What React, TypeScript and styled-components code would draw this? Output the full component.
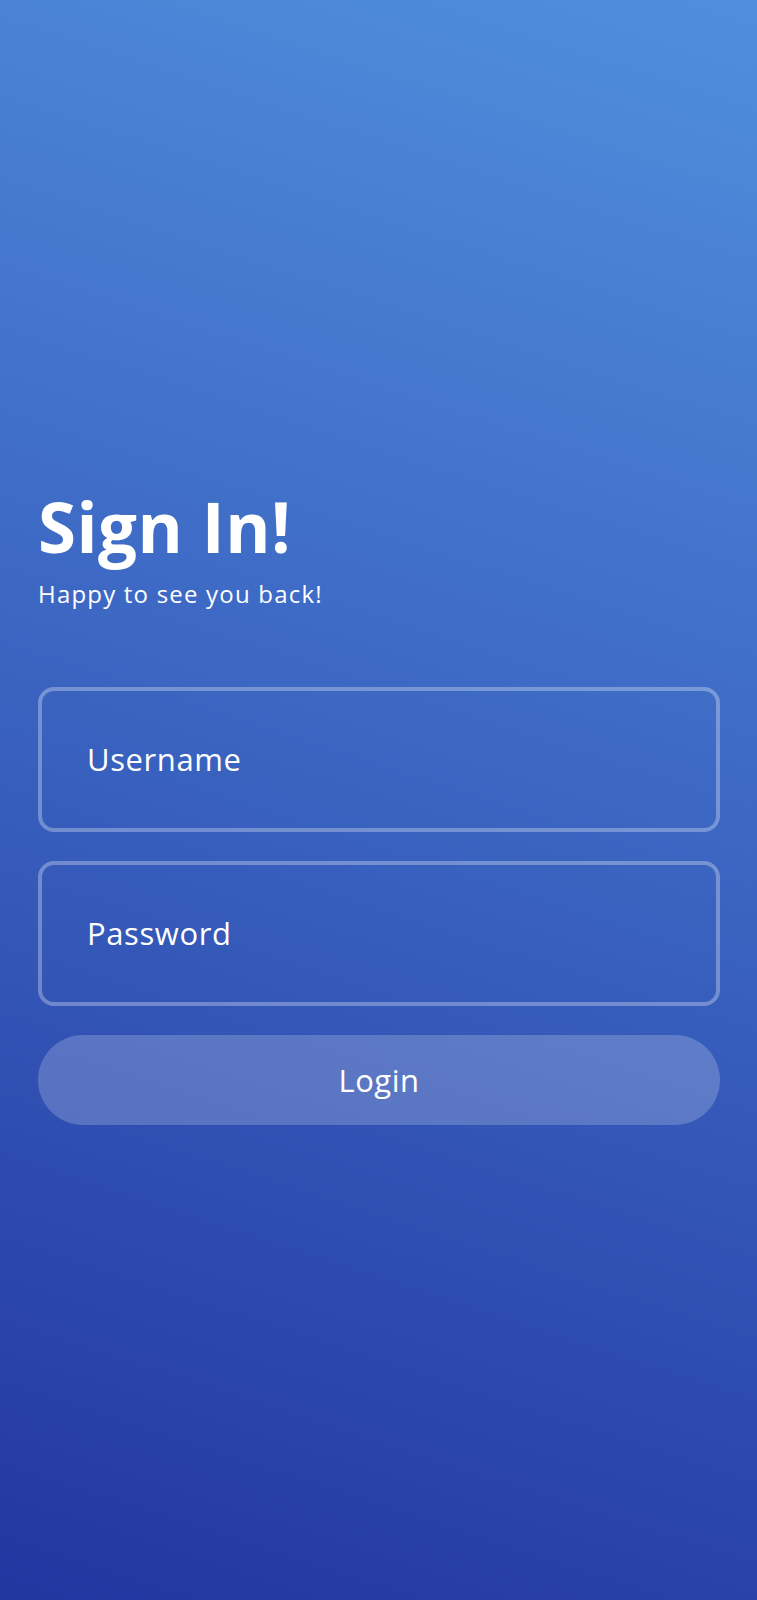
import React, { useState } from 'react';
import styled, { createGlobalStyle } from 'styled-components';

const GlobalStyle = createGlobalStyle`
  html, body {
    margin: 0;
    padding: 0;
  }
  body {
    font-family: 'Open Sans', 'Liberation Sans', sans-serif;
  }
  * {
    box-sizing: border-box;
  }
`;

const Page = styled.div`
  min-height: 1600px;
  display: flex;
  flex-direction: column;
  justify-content: center;
  padding: 10px 37px 0 38px;
  background: linear-gradient(18deg, #2236a0 0%, #3a63c0 50%, #508fdd 100%);
  color: #fff;
`;

const Heading = styled.div`
  display: flex;
  flex-direction: column;
  margin-bottom: 78px;
`;

const Title = styled.h1`
  margin: 0;
  font-size: 69px;
  font-weight: 700;
  line-height: 1.2;
  letter-spacing: 0.5px;
`;

const Subtitle = styled.p`
  margin: 10px 0 0;
  font-size: 24px;
  letter-spacing: 1.2px;
  line-height: 1.3;
`;

const Form = styled.form`
  display: flex;
  flex-direction: column;
  gap: 29px;
`;

const Field = styled.input`
  height: 145px;
  width: 100%;
  padding: 0 45px;
  border: 4px solid rgba(255, 255, 255, 0.3);
  border-radius: 16px;
  background: transparent;
  color: #fff;
  font-family: inherit;
  font-size: 31px;
  letter-spacing: 0.6px;
  outline: none;

  &::placeholder {
    color: #fff;
    opacity: 1;
  }
`;

const LoginButton = styled.button`
  height: 90px;
  width: 100%;
  border: none;
  border-radius: 45px;
  background: rgba(255, 255, 255, 0.2);
  color: #fff;
  font-family: inherit;
  font-size: 31px;
  letter-spacing: 0.5px;
  cursor: pointer;
`;

export default function App() {
  const [username, setUsername] = useState('');
  const [password, setPassword] = useState('');

  return (
    <>
      <GlobalStyle />
      <Page>
        <Heading>
          <Title>Sign In!</Title>
          <Subtitle>Happy to see you back!</Subtitle>
        </Heading>
        <Form onSubmit={(e) => e.preventDefault()}>
          <Field
            placeholder="Username"
            value={username}
            onChange={(e) => setUsername(e.target.value)}
          />
          <Field
            type="password"
            placeholder="Password"
            value={password}
            onChange={(e) => setPassword(e.target.value)}
          />
          <LoginButton type="submit">Login</LoginButton>
        </Form>
      </Page>
    </>
  );
}
